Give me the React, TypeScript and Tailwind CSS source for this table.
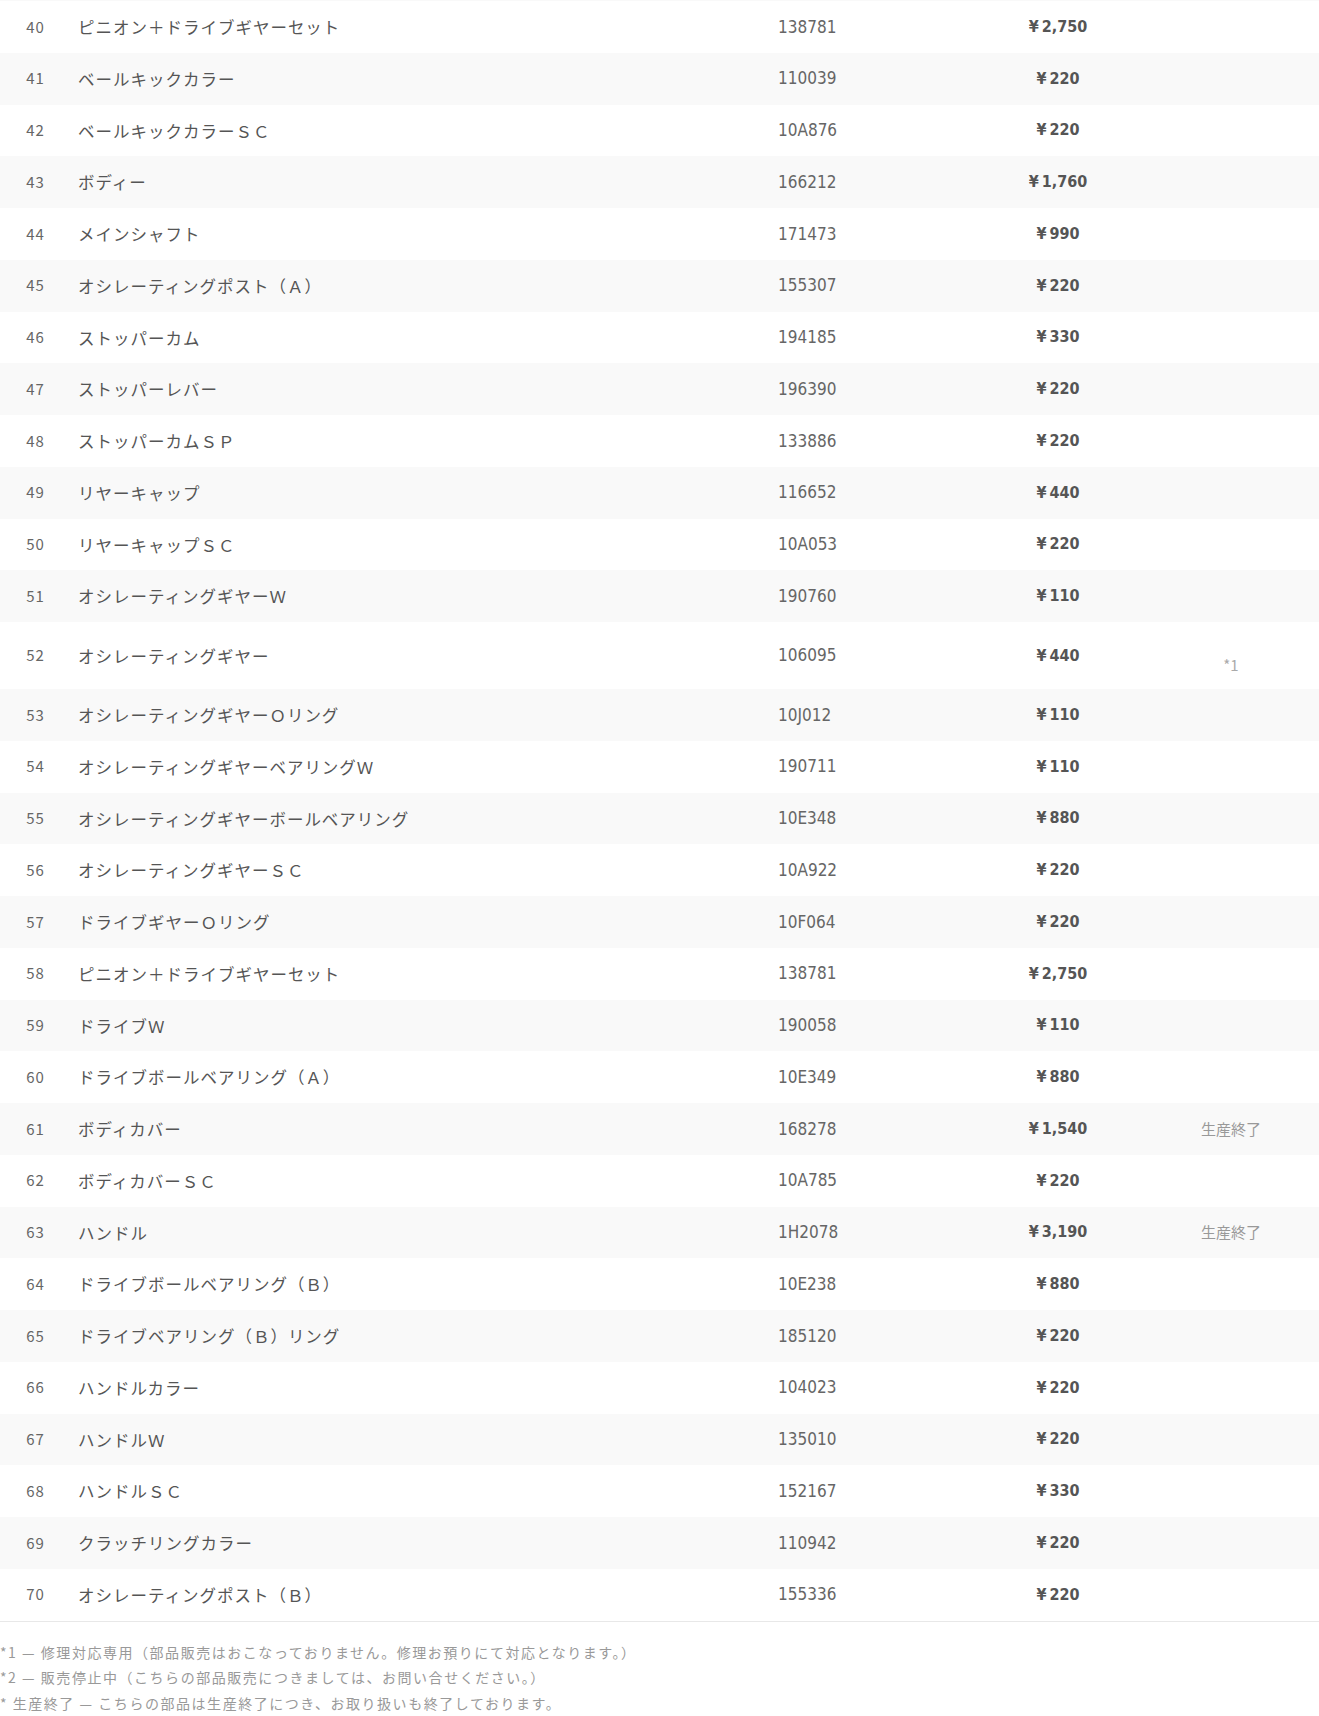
import React from "react";

type Part = {
  no: number;
  name: string;
  code: string;
  price: string;
  note?: string;
};

const parts: Part[] = [
  { no: 40, name: "ピニオン＋ドライブギヤーセット", code: "138781", price: "2,750" },
  { no: 41, name: "ベールキックカラー", code: "110039", price: "220" },
  { no: 42, name: "ベールキックカラーＳＣ", code: "10A876", price: "220" },
  { no: 43, name: "ボディー", code: "166212", price: "1,760" },
  { no: 44, name: "メインシャフト", code: "171473", price: "990" },
  { no: 45, name: "オシレーティングポスト（Ａ）", code: "155307", price: "220" },
  { no: 46, name: "ストッパーカム", code: "194185", price: "330" },
  { no: 47, name: "ストッパーレバー", code: "196390", price: "220" },
  { no: 48, name: "ストッパーカムＳＰ", code: "133886", price: "220" },
  { no: 49, name: "リヤーキャップ", code: "116652", price: "440" },
  { no: 50, name: "リヤーキャップＳＣ", code: "10A053", price: "220" },
  { no: 51, name: "オシレーティングギヤーＷ", code: "190760", price: "110" },
  { no: 52, name: "オシレーティングギヤー", code: "106095", price: "440", note: "*1" },
  { no: 53, name: "オシレーティングギヤーＯリング", code: "10J012", price: "110" },
  { no: 54, name: "オシレーティングギヤーベアリングＷ", code: "190711", price: "110" },
  { no: 55, name: "オシレーティングギヤーボールベアリング", code: "10E348", price: "880" },
  { no: 56, name: "オシレーティングギヤーＳＣ", code: "10A922", price: "220" },
  { no: 57, name: "ドライブギヤーＯリング", code: "10F064", price: "220" },
  { no: 58, name: "ピニオン＋ドライブギヤーセット", code: "138781", price: "2,750" },
  { no: 59, name: "ドライブＷ", code: "190058", price: "110" },
  { no: 60, name: "ドライブボールベアリング（Ａ）", code: "10E349", price: "880" },
  { no: 61, name: "ボディカバー", code: "168278", price: "1,540", note: "生産終了" },
  { no: 62, name: "ボディカバーＳＣ", code: "10A785", price: "220" },
  { no: 63, name: "ハンドル", code: "1H2078", price: "3,190", note: "生産終了" },
  { no: 64, name: "ドライブボールベアリング（Ｂ）", code: "10E238", price: "880" },
  { no: 65, name: "ドライブベアリング（Ｂ）リング", code: "185120", price: "220" },
  { no: 66, name: "ハンドルカラー", code: "104023", price: "220" },
  { no: 67, name: "ハンドルＷ", code: "135010", price: "220" },
  { no: 68, name: "ハンドルＳＣ", code: "152167", price: "330" },
  { no: 69, name: "クラッチリングカラー", code: "110942", price: "220" },
  { no: 70, name: "オシレーティングポスト（Ｂ）", code: "155336", price: "220" },
];

function PartRow({ part }: { part: Part }) {
  const striped = part.no % 2 === 1;
  const tall = part.note === "*1";

  return (
    <div
      className={`grid grid-cols-[70px_708px_190px_180px_166px_1fr] items-center ${
        tall ? "h-[67px]" : "h-[51.75px]"
      } ${striped ? "bg-[#f9f9f9]" : "bg-white"}`}
    >
      <span className="pl-[1px] text-center text-[15px] tracking-[0.06em] text-[#666]">{part.no}</span>
      <span className="pl-[8px] pt-[1px] text-[16.5px] tracking-[0.06em] text-[#555]">{part.name}</span>
      <span className="pt-[1px] font-['Liberation_Sans_Narrow','DejaVu_Sans_Condensed',sans-serif] text-[17px] text-[#666]">
        {part.code}
      </span>
      <span className="text-center font-['Liberation_Sans_Narrow','DejaVu_Sans_Condensed',sans-serif] text-[16px] font-bold text-[#555]">
        ¥<span className="ml-[3px]">{part.price}</span>
      </span>
      <span
        className={`text-center text-[15px] ${
          tall ? "pt-[20px] text-[#aaa]" : "text-[#999]"
        }`}
      >
        {part.note}
      </span>
      <span />
    </div>
  );
}

export default function App() {
  return (
    <div className="min-h-[1716px] bg-white font-['Noto_Sans_CJK_JP','Noto_Sans',sans-serif]">
      {/* tail of the previous row */}
      <div className="h-px bg-[#f9f9f9]" />

      <div className="border-b border-[#e8e8e8]">
        {parts.map((p) => (
          <PartRow key={p.no} part={p} />
        ))}
      </div>

      <div className="pt-[18px] text-[14px] leading-[25.5px] tracking-[0.11em] text-[#999]">
        <p>*1 — 修理対応専用（部品販売はおこなっておりません。修理お預りにて対応となります。）</p>
        <p>*2 — 販売停止中（こちらの部品販売につきましては、お問い合せください。）</p>
        <p>* 生産終了 — こちらの部品は生産終了につき、お取り扱いも終了しております。</p>
      </div>
    </div>
  );
}
